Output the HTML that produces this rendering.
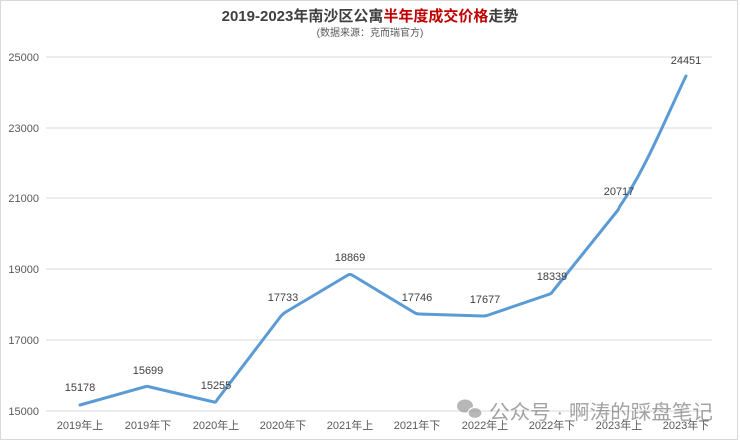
<!DOCTYPE html><html><head><meta charset="utf-8"><style>
body{margin:0;background:#fff;}
svg text{font-family:"Liberation Sans","Noto Sans CJK SC",sans-serif;}
</style></head><body>
<svg width="740" height="441" viewBox="0 0 740 441" xmlns="http://www.w3.org/2000/svg">
<rect x="0.5" y="0.5" width="737" height="439" fill="#fff" stroke="#d9d9d9"/>
<text x="370" y="21" text-anchor="middle" font-size="15" font-weight="bold" fill="#404040">2019-2023年南沙区公寓<tspan fill="#c00000">半年度成交价格</tspan>走势</text>
<text x="370" y="36" text-anchor="middle" font-size="10" fill="#595959">(数据来源：克而瑞官方)</text>
<g stroke="#d9d9d9" stroke-width="1">
<line x1="46" x2="712" y1="57" y2="57"/><line x1="46" x2="712" y1="128" y2="128"/><line x1="46" x2="712" y1="198" y2="198"/><line x1="46" x2="712" y1="269" y2="269"/><line x1="46" x2="712" y1="340" y2="340"/><line x1="46" x2="712" y1="411" y2="411"/>
</g>
<g font-size="11" fill="#595959" text-anchor="end">
<text x="39" y="61">25000</text><text x="39" y="132">23000</text><text x="39" y="202">21000</text><text x="39" y="273">19000</text><text x="39" y="344">17000</text><text x="39" y="415">15000</text>
</g>
<path d="M80,405 L146,386.5 Q148,386 150,387 L214,402 Q216,402.5 217,400 L281,316 Q283,314 285,312.5 L348,275 Q350,274 352,275 L415,313 Q417,314 419,314 L483,316 Q485,316 487,315.5 L550,294 Q552,293 553,291 L618,210 Q619,208 620,206 C645,170 665,120 686,76" fill="none" stroke="#5b9bd5" stroke-width="3" stroke-linecap="round" stroke-linejoin="round"/>
<g font-size="11" fill="#404040" text-anchor="middle">
<text x="80" y="391">15178</text><text x="148" y="374">15699</text><text x="216" y="389">15255</text><text x="283" y="301">17733</text><text x="350" y="261">18869</text><text x="417" y="301">17746</text><text x="485" y="303">17677</text><text x="552" y="280">18339</text><text x="619" y="195">20717</text><text x="686" y="64">24451</text>
</g>
<g font-size="11" fill="#595959" text-anchor="middle">
<text x="80" y="429">2019年上</text><text x="148" y="429">2019年下</text><text x="216" y="429">2020年上</text><text x="283" y="429">2020年下</text><text x="350" y="429">2021年上</text><text x="417" y="429">2021年下</text><text x="485" y="429">2022年上</text><text x="552" y="429">2022年下</text><text x="619" y="429">2023年上</text><text x="686" y="429">2023年下</text>
</g>
<g opacity="0.6">
<ellipse cx="465" cy="406" rx="8" ry="6.5" fill="#888"/>
<ellipse cx="475" cy="413" rx="7" ry="5.5" fill="#888" stroke="#fff" stroke-width="1.2"/>
<text x="489" y="419" font-size="20" fill="#666" textLength="224" lengthAdjust="spacingAndGlyphs">公众号 · 啊涛的踩盘笔记</text>
</g>
</svg>
</body></html>
